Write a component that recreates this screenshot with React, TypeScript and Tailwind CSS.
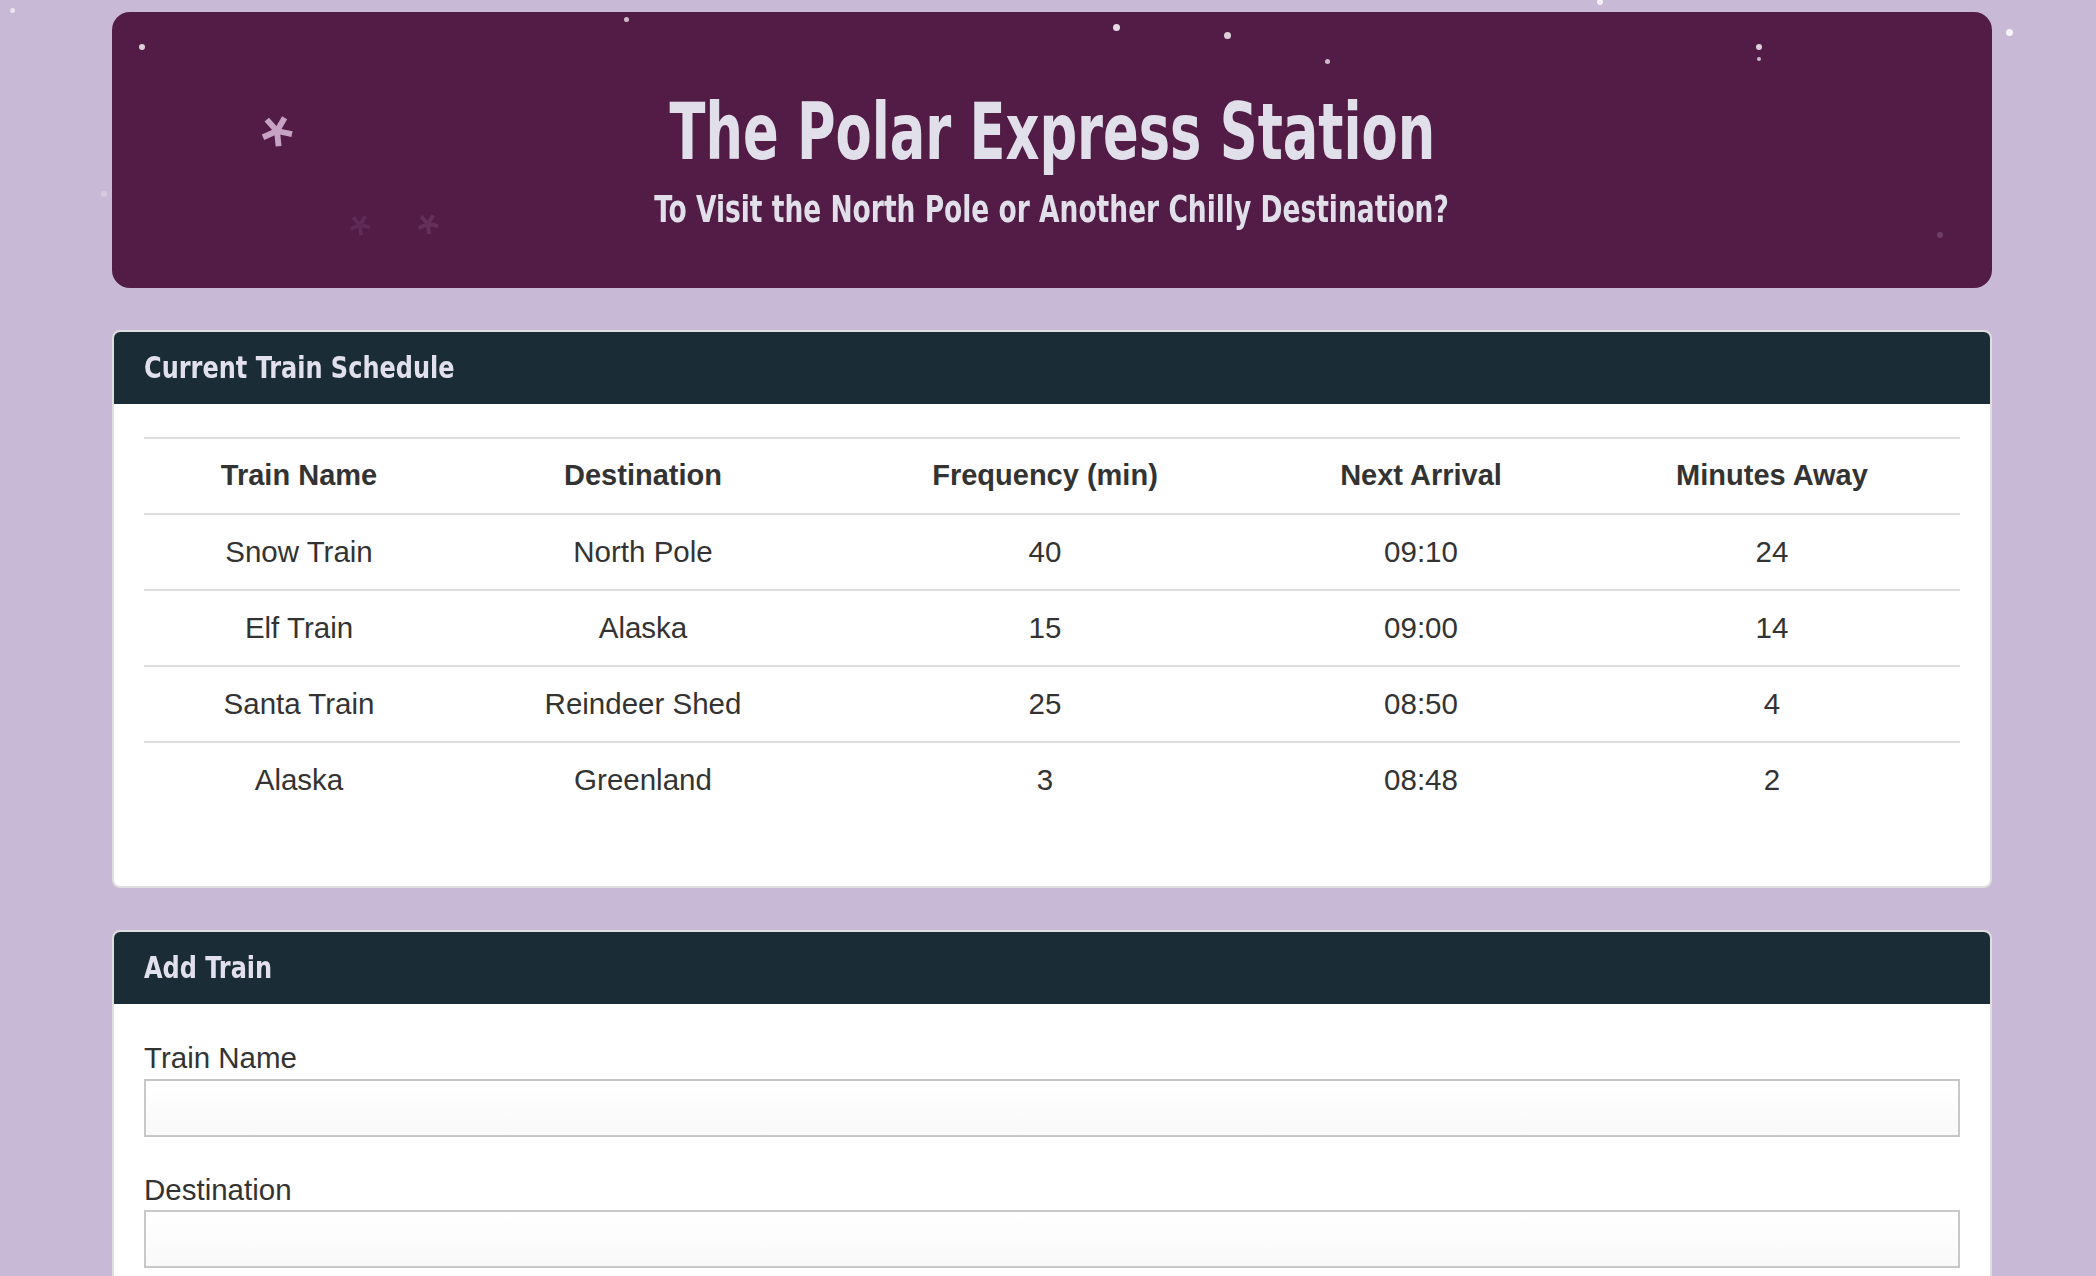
import React from "react";

const TRAINS = [
  { name: "Snow Train", dest: "North Pole", freq: 40, next: "09:10", away: 24 },
  { name: "Elf Train", dest: "Alaska", freq: 15, next: "09:00", away: 14 },
  { name: "Santa Train", dest: "Reindeer Shed", freq: 25, next: "08:50", away: 4 },
  { name: "Alaska", dest: "Greenland", freq: 3, next: "08:48", away: 2 },
];

const COLUMNS = [
  { label: "Train Name", width: 310 },
  { label: "Destination", width: 378 },
  { label: "Frequency (min)", width: 426 },
  { label: "Next Arrival", width: 326 },
  { label: "Minutes Away", width: 376 },
];

// little snow dots scattered over the page
const DOTS = [
  { x: 12, y: 10, s: 5, o: 0.6 },
  { x: 104, y: 194, s: 6, o: 0.25 },
  { x: 142, y: 47, s: 6, o: 0.8 },
  { x: 626, y: 19, s: 5, o: 0.7 },
  { x: 1116, y: 27, s: 7, o: 0.85 },
  { x: 1227, y: 35, s: 7, o: 0.8 },
  { x: 1327, y: 61, s: 5, o: 0.7 },
  { x: 1759, y: 47, s: 6, o: 0.8 },
  { x: 1759, y: 59, s: 4, o: 0.7 },
  { x: 1600, y: 2, s: 6, o: 0.8 },
  { x: 2009, y: 32, s: 7, o: 0.85 },
  { x: 1940, y: 235, s: 6, o: 0.15 },
];

const FLAKES = [
  { x: 277, y: 131, s: 36, color: "#c7a3c3" },
  { x: 360, y: 225, s: 24, color: "#602a56" },
  { x: 428, y: 224, s: 24, color: "#64305a" },
];

function Flake({ size, color }: { size: number; color: string }) {
  const arms = [12, 84, 156, 228, 300];
  return (
    <svg width={size} height={size} viewBox="-20 -20 40 40">
      {arms.map((a) => {
        const r = (a * Math.PI) / 180;
        return (
          <line
            key={a}
            x1={0}
            y1={0}
            x2={17 * Math.cos(r)}
            y2={17 * Math.sin(r)}
            stroke={color}
            strokeWidth={6.5}
          />
        );
      })}
    </svg>
  );
}

function PanelHeading({ children }: { children: React.ReactNode }) {
  return (
    <div className="flex h-[72px] items-center bg-[#1a2c36] px-[30px]">
      <h3 className="origin-left scale-x-[0.89] font-['DejaVu_Sans_Condensed',sans-serif] text-[30px] font-bold leading-none text-[#e1e0ec]">
        {children}
      </h3>
    </div>
  );
}

function Field({ label }: { label: string }) {
  return (
    <div className="flex flex-col">
      <label className="mb-[6px] text-[29.5px] leading-none text-[#333]">{label}</label>
      <input
        type="text"
        className="h-[58px] w-full border-2 border-[#c8c8c8] bg-gradient-to-b from-white to-[#f9f9f9] px-3 outline-none"
      />
    </div>
  );
}

export default function App() {
  return (
    <div className="relative min-h-screen overflow-hidden bg-[#c8b9d6] font-['Liberation_Sans',Arial,sans-serif] text-[#333]">
      <div className="ml-[112px] flex w-[1880px] flex-col gap-[42px] pb-16 pt-[12px]">
        {/* Jumbotron */}
        <header className="flex h-[276px] flex-col items-center rounded-[18px] bg-[#521c47] pt-[81px] font-['DejaVu_Sans_Condensed',sans-serif] text-[#e1e0ea]">
          <h1 className="scale-x-[0.75] whitespace-nowrap text-[78px] font-bold leading-none">
            The Polar Express Station
          </h1>
          <h2 className="mt-[19px] scale-x-[0.775] whitespace-nowrap text-[38px] font-bold leading-none">
            To Visit the North Pole or Another Chilly Destination?
          </h2>
        </header>

        {/* Schedule */}
        <section className="overflow-hidden rounded-[8px] border-2 border-[#dedede] bg-white">
          <PanelHeading>Current Train Schedule</PanelHeading>
          <div className="px-[30px] pb-[68px] pt-[33px]">
            <table className="w-full table-fixed border-collapse text-center text-[29.5px]">
              <colgroup>
                {COLUMNS.map((c) => (
                  <col key={c.label} style={{ width: c.width }} />
                ))}
              </colgroup>
              <thead>
                <tr className="h-[76px] border-y-2 border-[#dddddd]">
                  {COLUMNS.map((c) => (
                    <th key={c.label} className="text-[29px] font-bold">
                      {c.label}
                    </th>
                  ))}
                </tr>
              </thead>
              <tbody>
                {TRAINS.map((t, i) => (
                  <tr
                    key={t.name}
                    className={`h-[76px] ${i > 0 ? "border-t-2 border-[#dddddd]" : ""}`}
                  >
                    <td>{t.name}</td>
                    <td>{t.dest}</td>
                    <td>{t.freq}</td>
                    <td>{t.next}</td>
                    <td>{t.away}</td>
                  </tr>
                ))}
              </tbody>
            </table>
          </div>
        </section>

        {/* Add train form */}
        <section className="overflow-hidden rounded-[8px] border-2 border-[#dedede] bg-white">
          <PanelHeading>Add Train</PanelHeading>
          <form className="flex flex-col gap-[38px] px-[30px] pb-[40px] pt-[39px]">
            <Field label="Train Name" />
            <Field label="Destination" />
          </form>
        </section>
      </div>

      {/* snow overlay */}
      <div className="pointer-events-none absolute inset-0">
        {DOTS.map((d, i) => (
          <span
            key={i}
            className="absolute rounded-full bg-white blur-[0.5px]"
            style={{ left: d.x - d.s / 2, top: d.y - d.s / 2, width: d.s, height: d.s, opacity: d.o }}
          />
        ))}
        {FLAKES.map((f, i) => (
          <span
            key={i}
            className="absolute"
            style={{ left: f.x - f.s / 2, top: f.y - f.s / 2 }}
          >
            <Flake size={f.s} color={f.color} />
          </span>
        ))}
      </div>
    </div>
  );
}
